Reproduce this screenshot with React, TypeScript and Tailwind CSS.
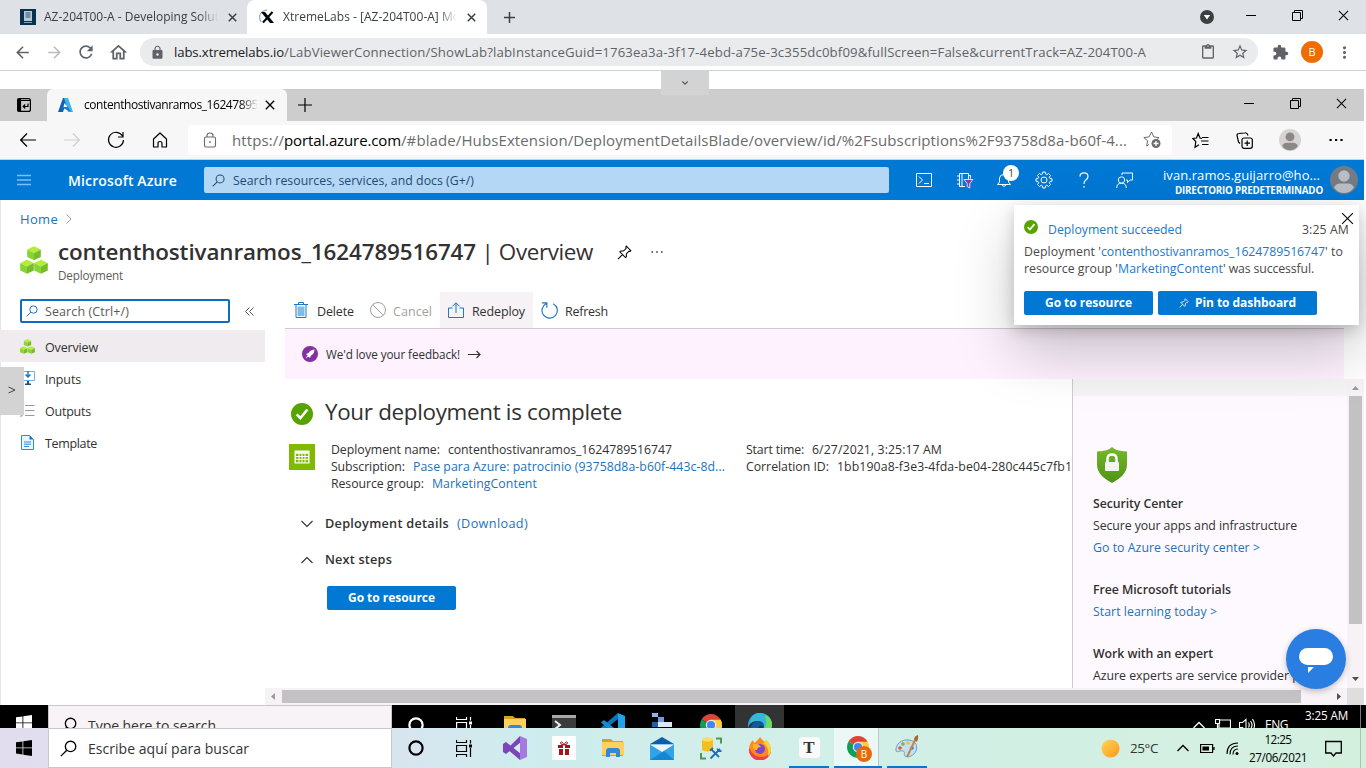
import { useLayoutEffect, useRef, useState } from "react";
import type { ReactNode } from "react";
import { MdArrowBack, MdArrowForward, MdRefresh, MdOutlineHome, MdLock, MdStarBorder, MdExtension, MdMoreVert, MdContentPaste } from "react-icons/md";

/* Single-line text set to a fixed advance width by even tracking. */
function T({ w, className = "", children }: { w: number; className?: string; children: string }) {
  const ref = useRef<HTMLSpanElement>(null);
  const [ls, setLs] = useState(0);
  useLayoutEffect(() => {
    const el = ref.current;
    if (!el) return;
    const natural = el.getBoundingClientRect().width;
    setLs((w - natural) / children.length);
  }, [w, children]);
  return (
    <span ref={ref} className={`inline-block shrink-0 whitespace-pre ${className}`} style={{ letterSpacing: `${ls}px` }}>
      {children}
    </span>
  );
}

function Slot({ className, children }: { className: string; children: ReactNode }) {
  return <div className={`flex shrink-0 items-center justify-center ${className}`}>{children}</div>;
}

function I({ s = 16, sw = 1, vb = 16, className = "", children }: { s?: number; sw?: number; vb?: number; className?: string; children: ReactNode }) {
  return (
    <svg width={s} height={s} viewBox={`0 0 ${vb} ${vb}`} fill="none" stroke="currentColor" strokeWidth={sw} className={`shrink-0 ${className}`}>
      {children}
    </svg>
  );
}

const Cross = ({ s = 12, sw = 1.1 }: { s?: number; sw?: number }) => (
  <I s={s} vb={12} sw={sw}><path d="M1 1l10 10M11 1L1 11" /></I>
);
const Plus = ({ s, sw }: { s: number; sw: number }) => <I s={s} vb={14} sw={sw}><path d="M7 0v14M0 7h14" /></I>;
const Minimize = () => <I s={10} vb={10}><path d="M0 5.5h10" /></I>;
const Restore = () => <I s={11} vb={11}><path d="M.5 2.5h8v8h-8zM2.5 2.5v-2h8v8h-2" /></I>;
const Magnifier = ({ s = 14, className = "" }: { s?: number; className?: string }) => (
  <I s={s} vb={14} sw={1.1} className={className}><circle cx="8.7" cy="5.3" r="4.3" /><path d="M5.6 8.4L.7 13.3" /></I>
);
const Cubes = ({ s }: { s: number }) => (
  <svg width={s} height={s} viewBox="0 0 28 28" className="shrink-0">
    {[[14, .2], [7, 13.700], [21, 13.700]].map(([x, y]) => (
      <g key={`${x}-${y}`} transform={`translate(${x} ${y})`}>
        <path d="M0 0l6.800 3.300L0 6.800-6.800 3.300z" fill="#b4ec36" />
        <path d="M-6.800 3.300L0 6.800V14l-6.800-3.200z" fill="#86d633" />
        <path d="M6.800 3.300L0 6.800V14l6.800-3.200z" fill="#76bc2d" />
      </g>
    ))}
  </svg>
);
const Pin = ({ s, sw = 1 }: { s: number; sw?: number }) => (
  <I s={s} vb={16} sw={sw}><path d="M10 1.2l4.800 4.800-1 .9-.9-.3-3 3 .2 2.800-1 1L3 7.300l1-1 2.800.2 3-3-.4-1.300zM5.800 10.200L1 15" /></I>
);
const Check = ({ s }: { s: number }) => (
  <svg width={s} height={s} viewBox="0 0 22 22" className="shrink-0">
    <circle cx="11" cy="11" r="11" fill="#57a300" />
    <path d="M5.700 11.300l3.700 3.800 7-8.600" fill="none" stroke="#fff" strokeWidth="2.600" />
  </svg>
);
const Chev = ({ d, s = 12, sw = 1.100 }: { d: "up" | "down" | "right"; s?: number; sw?: number }) => (
  <I s={s} vb={12} sw={sw}><path d={d === "up" ? "M.5 9L6 3.500 11.500 9" : d === "down" ? "M.5 3L6 8.500 11.500 3" : "M3 .5L8.500 6 3 11.500"} /></I>
);
const Person = ({ s, bg, fg }: { s: number; bg: string; fg: string }) => (
  <svg width={s} height={s} viewBox="0 0 28 28" className="shrink-0">
    <circle cx="14" cy="14" r="14" fill={bg} />
    <circle cx="14" cy="10" r="5.700" fill={fg} />
    <path d="M4 21.500q2-4 6-4h8q4 0 6 4-4 5.500-10 5.500T4 21.500z" fill={fg} />
  </svg>
);
const WinLogo = () => (
  <svg width="16" height="16" viewBox="0 0 16 16" fill="currentColor"><path d="M0 2.300l6.500-.9v6.100H0zM7.300 1.300L16 0v7.500H7.300zM0 8.300h6.500v6.200L0 13.600zM7.300 8.300H16V16l-8.700-1.300z" /></svg>
);
const TaskView = () => (
  <I s={17} vb={17} sw={1.200}><path d="M.5 0v2.500h10V0M.5 17v-2.500h10V17M.6 5.500h9.900v6H.6zM14.500 0v3.500M14.500 8v9" /><rect x="13" y="4.500" width="3" height="3" fill="currentColor" stroke="none" /></I>
);
const Folder = () => (
  <svg width="22" height="20" viewBox="0 0 22 20">
    <path d="M0 1h9l2 2H21v15H0z" fill="#d9a11c" /><path d="M0 4h22v13H0z" fill="#ffd15c" />
    <path d="M4 19v-6q0-3 3-3h8q3 0 3 3v6h-4v-4H8v4z" fill="#2f8bd8" />
  </svg>
);
const Chrome = () => (
  <svg width="22" height="22" viewBox="0 0 22 22">
    <path d="M11 11L1.500 5.500A11 11 0 0 1 20.500 5.500z" fill="#db4437" />
    <path d="M11 11L20.500 5.500A11 11 0 0 1 11 22z" fill="#ffcd40" />
    <path d="M11 11v11A11 11 0 0 1 1.500 5.500z" fill="#0f9d58" />
    <path d="M11 5.800h9.600A11 11 0 0 1 11 22l4.600-8.300z" fill="#ffcd40" />
    <circle cx="11" cy="11" r="5.200" fill="#f1f1f1" /><circle cx="11" cy="11" r="4.100" fill="#4285f4" />
  </svg>
);
const Cortana = () => <I s={16} sw={2.200}><circle cx="8" cy="8" r="6.600" /></I>;

function ChromeBrowser() {
  return (
    <>
      <div className="flex h-[34px] bg-[#dee1e6] text-[#3c4043]">
        <div className="flex w-[247px] items-center pl-5 text-[12px]">
          <svg width="16" height="16" viewBox="0 0 16 16"><path d="M0 0h16v16H0z" fill="#06344f" /><path d="M4 2h8v10H4z" fill="#b8cbd5" /><path d="M5.500 4h5M5.500 6h5M5.500 8h5" stroke="#31566b" /><path d="M4 13.500h8" stroke="#8aa5b3" /></svg>
          <div className="ml-2 w-[176px] overflow-hidden [mask-image:linear-gradient(to_right,black_88%,transparent_99%)]"><T w={175}>AZ-204T00-A - Developing Solut</T></div>
          <Slot className="w-[24px]"><Cross s={9} sw={2} /></Slot>
        </div>
        <div className="flex w-[240px] items-center rounded-t-lg bg-white pl-3 text-[12px]">
          <svg width="16" height="16" viewBox="0 0 16 16"><path d="M2 13C-1 7 1 2 8 1" fill="none" stroke="#6f8fc4" /><path d="M2 3h4l9 11h-4z" fill="#050505" /><path d="M13.500 3L4 13.500" stroke="#050505" strokeWidth="2" /></svg>
          <div className="ml-2 w-[176px] overflow-hidden [mask-image:linear-gradient(to_right,black_88%,transparent_99%)]"><T w={177}>XtremeLabs - [AZ-204T00-A] Mo</T></div>
          <Slot className="w-[24px]"><Cross s={9} sw={2} /></Slot>
        </div>
        <Slot className="w-11"><Plus s={11} sw={1.900} /></Slot>
        <div className="ml-auto flex pb-1 text-black">
          <Slot className="w-[42px] pt-1"><svg width="14" height="14" viewBox="0 0 14 14"><circle cx="7" cy="7" r="7" fill="#3c4043" /><path d="M3.800 5h6.400L7 9.500z" fill="#fff" /></svg></Slot>
          <Slot className="w-[46px]"><Minimize /></Slot>
          <Slot className="w-[46px]"><Restore /></Slot>
          <Slot className="w-[46px]"><Cross s={11} /></Slot>
        </div>
      </div>
      <div className="flex h-[37px] items-center border-b border-[#cfd1d4] bg-white pl-1.5 text-[#5f6368]">
        <Slot className="w-8"><MdArrowBack size={19} /></Slot>
        <Slot className="w-8 text-[#babcbe]"><MdArrowForward size={19} /></Slot>
        <Slot className="w-8"><MdRefresh size={20} /></Slot>
        <Slot className="w-8"><MdOutlineHome size={21} /></Slot>
        <div className="ml-1.5 flex h-7 w-[1118px] shrink-0 items-center rounded-full bg-[#eaebed] pl-2.5 pr-0.5">
          <MdLock size={15} />
          <div className="ml-[9px] flex pt-px text-[13.200px]">
            <T w={110} className="text-[#202124]">labs.xtremelabs.io</T>
            <T w={862}>/LabViewerConnection/ShowLab?labInstanceGuid=1763ea3a-3f17-4ebd-a75e-3c355dc0bf09&amp;fullScreen=False&amp;currentTrack=AZ-204T00-A</T>
          </div>
          <Slot className="ml-auto w-8"><MdContentPaste size={16} /></Slot>
          <Slot className="w-8"><MdStarBorder size={18} /></Slot>
        </div>
        <Slot className="ml-1.5 w-8"><MdExtension size={17} /></Slot>
        <Slot className="w-8"><span className="flex h-[22px] w-[22px] items-center justify-center rounded-full bg-[#ee6c00] text-[11px] text-white">B</span></Slot>
        <Slot className="w-8"><MdMoreVert size={19} /></Slot>
      </div>
    </>
  );
}

function EdgeBrowser() {
  return (
    <>
      <div className="mr-0.5 flex h-8 bg-[#cdcdcd] text-black">
        <Slot className="w-[47px]"><I s={14} vb={14} sw={1.200}><rect x=".6" y=".6" width="12.800" height="12.800" rx="2" /><path d="M1 1h2.500v12H1zM1 2.500h12" fill="currentColor" /><path d="M11 5.500v3H6.500M8.200 6.500l-2 2 2 2" /></I></Slot>
        <div className="flex w-[240px] items-center rounded-t-md bg-[#f7f7f7] pl-[11px] text-[12px]">
          <svg width="16" height="14" viewBox="0 0 16 14"><path d="M5 0h5L5 14H0z" fill="#1260ae" /><path d="M6 0h4l5 14h-5z" fill="#3ab4ec" /><path d="M3 9h7l3 5z" fill="#1d7bd0" /><path d="M6.500 5l-1 4H9z" fill="#f7f7f7" /></svg>
          <div className="ml-2.5 w-[174px] overflow-hidden [mask-image:linear-gradient(to_right,black_90%,transparent)]"><T w={174}>contenthostivanramos_16247895</T></div>
          <Slot className="ml-0.5 w-5"><Cross s={10} sw={1.600} /></Slot>
        </div>
        <Slot className="w-[35px]"><Plus s={14} sw={1.200} /></Slot>
        <div className="ml-auto flex pb-1">
          <Slot className="w-[46px]"><Minimize /></Slot>
          <Slot className="w-[46px]"><Restore /></Slot>
          <Slot className="w-[46px]"><Cross s={11} /></Slot>
        </div>
      </div>
      <div className="mr-0.5 flex h-[39px] items-center border-b border-[#bcd3ea] bg-[#f7f7f7] pl-1.5 text-black">
        <Slot className="w-11"><I s={16} sw={1.200}><path d="M0 8h16M7 1.500L.7 8 7 14.500" /></I></Slot>
        <Slot className="w-11 text-[#cfcfcf]"><I s={16} sw={1.200}><path d="M0 8h16M9 1.500L15.300 8 9 14.500" /></I></Slot>
        <Slot className="w-11"><I s={18} vb={18} sw={1.200}><path d="M15.500 5A7.500 7.500 0 1 0 16.500 9M16 1v5h-5" /></I></Slot>
        <Slot className="w-11"><I s={16} sw={1.200}><path d="M1.500 7L8 1l6.500 6v8H10v-3.500q0-2-2-2t-2 2V15H1.500z" strokeLinejoin="round" /></I></Slot>
        <div className="ml-1.5 flex h-[30px] w-[984px] items-center rounded bg-white text-[#6b6b6b]">
          <Slot className="w-11"><I s={16} sw={1.100}><rect x="2.500" y="5" width="11" height="10" rx="1.500" /><path d="M5 5V3.500q0-2.500 3-2.500t3 2.500V5" /><rect x="7.200" y="9.200" width="1.600" height="1.600" fill="currentColor" stroke="none" /></I></Slot>
          <div className="flex text-[15px]">
            <T w={52}>https://</T><T w={117} className="text-black">portal.azure.com</T>
            <T w={726}>/#blade/HubsExtension/DeploymentDetailsBlade/overview/id/%2Fsubscriptions%2F93758d8a-b60f-4...</T>
          </div>
          <Slot className="ml-auto w-10"><I s={18} vb={18}><path d="M8.500 1l2.300 4.900 5.200.7-3.800 3.600M6 13.500L3.700 15l.9-5.300L.8 6.600l5.300-.7L8.500 1" /><circle cx="13" cy="12.500" r="4.500" fill="currentColor" stroke="none" /><path d="M13 10v5M10.500 12.500h5" stroke="#fff" strokeWidth="1.300" /></I></Slot>
        </div>
        <Slot className="ml-1.5 w-11"><I s={17} vb={17} sw={1.200}><path d="M10 6.500L8 6 6.200 1.500 4.500 6 .8 6.500 3.800 9.500l-.8 5.700 4-2.500M10 5.500h6.500M9 9h7.500M10 12.500h6.500" /></I></Slot>
        <Slot className="w-11"><I s={17} vb={17} sw={1.200}><rect x="6" y="6" width="10.300" height="10.300" rx="2" /><path d="M11.200 8.500v5.500M8.500 11.200H14M4 11.500L2.500 10 1 3.500q0-2 2-2L9 .8q1.500-.3 2.300 1.200l.7 1.500" /></I></Slot>
        <Slot className="w-12"><Person s={22} bg="#d6d3d1" fg="#8a8785" /></Slot>
        <Slot className="w-11"><I s={14} vb={14}><path d="M.5 7h2.200M6 7h2.200M11.400 7h2.200" strokeWidth="2" /></I></Slot>
      </div>
    </>
  );
}

function AzureBar() {
  return (
    <div className="mr-0.5 flex h-10 items-center bg-[#0078d4] text-white">
      <Slot className="w-[48px] text-[#7fbfee]"><I s={14} vb={14}><path d="M0 2.500h14M0 7h14M0 11.500h14" strokeWidth="1.500" /></I></Slot>
      <div className="ml-5 w-[136px] shrink-0 pt-px text-[14px] font-semibold"><T w={109}>Microsoft Azure</T></div>
      <div className="flex h-[26px] w-[685px] shrink-0 items-center rounded-xs bg-[#b3d7f5] pl-2 text-[12.300px] text-[#1f4b73]">
        <Magnifier s={13} /><T w={241} className="ml-2 pt-0.5">Search resources, services, and docs (G+/)</T>
      </div>
      <Slot className="ml-[15px] w-10"><I s={16}><path d="M.5 1.500h15v13H.5zM3 4.500l3.500 3.500L3 11.500M8 11.500h5" /></I></Slot>
      <Slot className="w-10"><I s={17} vb={17}><path d="M12.500 7V1.500h-9v13H9M6 1.500v13M1 4h2.500M1 8h2.500M1 12h2.500M12.500 3.500h2v3" /><path d="M8 7.500h9l-3.200 4V16l-2.600-1.500v-3z" fill="#7a3eb1" stroke="#fff" strokeWidth=".8" /></I></Slot>
      <Slot className="relative w-10"><I s={16}><path d="M1.500 12.500h13l-2-2.500V6Q12 2.500 8 2.500T3.500 6v4zM6 13q2 3 4 0" /></I><span className="absolute left-[19px] top-[-7px] flex h-4 w-4 items-center justify-center rounded-full bg-white text-[10px] leading-none text-[#333]">1</span></Slot>
      <Slot className="w-10"><I s={18} vb={18}><circle cx="9" cy="9" r="3" /><path d="M7.800 1h2.400l.4 2 1.200.6L13.600 2.500l1.900 1.900-1.200 1.800.6 1.300 2.100.3v2.400l-2.100.4-.6 1.200 1.200 1.800-1.900 1.900-1.800-1.200-1.200.6-.4 2.100H7.800l-.4-2.100-1.200-.6-1.800 1.200-1.900-1.900 1.200-1.800-.6-1.200L1 10.200V7.800l2.100-.3.600-1.300-1.200-1.800 1.900-1.900 1.800 1.100L7.400 3z" /></I></Slot>
      <Slot className="w-10"><I s={16} sw={1.200}><path d="M4 4.500Q4 .8 8 .8t4 3.700Q12 6.500 9.800 8 8 9.300 8 12M8 14v1.700" /></I></Slot>
      <Slot className="w-10"><I s={17} vb={17}><circle cx="5.500" cy="8" r="3.200" /><path d="M.7 16q0-4.800 4.800-4.800t4.800 4.800M6 3V1h10.500v7H14l-2.500 2.500V8h-1.500" /></I></Slot>
      <div className="ml-auto flex flex-col items-end pt-1.5">
        <T w={157} className="mr-[3px] text-[13px] leading-[16px]">ivan.ramos.guijarro@ho...</T>
        <T w={148} className="text-[9.800px] font-bold leading-[16px]">DIRECTORIO PREDETERMINADO</T>
      </div>
      <div className="ml-[7px] mr-[6px] shrink-0"><Person s={28} bg="#747b82" fg="#b9bec4" /></div>
    </div>
  );
}

function NavItem({ icon, label, w, active = false }: { icon: ReactNode; label: string; w: number; active?: boolean }) {
  return (
    <div className={`flex h-8 items-center pl-5 ${active ? "bg-[#efebef]" : ""}`}>
      <Slot className="mr-[10px] w-[15px]">{icon}</Slot><T w={w} className="pt-[5px]">{label}</T>
    </div>
  );
}

function Sidebar() {
  return (
    <div className="w-[265px] shrink-0 text-[12.500px] text-[#323130]">
      <div className="flex h-[38px] items-center pl-5">
        <div className="flex h-6 w-[210px] items-center rounded-xs border-2 border-[#0f6cbd] bg-white pl-1"><Magnifier s={12} className="text-[#0f6cbd]" /><T w={84} className="ml-[7px] pt-0.5 text-[#5c5a58]">Search (Ctrl+/)</T></div>
        <Slot className="ml-[11px] w-4 text-[#555]"><I s={9} vb={9}><path d="M4.500.5l-4 4 4 4M8.500.5l-4 4 4 4" /></I></Slot>
      </div>
      <NavItem active label="Overview" w={53} icon={<Cubes s={15} />} />
      <NavItem label="Inputs" w={36} icon={<svg width="14" height="14" viewBox="0 0 14 14"><path d="M.5.500h13v9H.5z" fill="#fff" stroke="#6aaee6" /><path d="M7 0v6M4.500 3.500L7 6l2.500-2.500" fill="none" stroke="#0f78c8" strokeWidth="1.400" /><path d="M6 10h2v3H6zM4 12.500h6V14H4z" fill="#234d80" /></svg>} />
      <NavItem label="Outputs" w={46} icon={<svg width="15" height="13" viewBox="0 0 15 13" fill="none"><path d="M5 1.500h9.500M5 6.500h9.500M5 11.500h9.500" stroke="#9b9b9b" strokeWidth="1.200" /><path d="M0 1.500l1 1 2-2M0 6.500l1 1 2-2M0 11.500l1 1 2-2" stroke="#2f82cf" /></svg>} />
      <NavItem label="Template" w={52} icon={<svg width="13" height="15" viewBox="0 0 13 15"><path d="M.5.500h8l4 4v10H.5z" fill="#eaf5fd" stroke="#2f8bd8" /><path d="M8.500.500l4 4h-4z" fill="#1673c4" /><path d="M3 7h7M3 9.200h7M3 11.500h5" stroke="#2f8bd8" /></svg>} />
    </div>
  );
}

function Commands() {
  return (
    <div className="flex h-[37px] border-b border-[#cfccce] text-[12.500px] text-[#323130]">
      <div className="flex items-center pl-2"><Slot className="w-4"><svg width="14" height="16" viewBox="0 0 14 16"><path d="M2 3v12.500h10V3M0 2.500h14M4.500 2V.5h5V2" fill="none" stroke="#1b79c9" /><path d="M3.500 4.500h7V14h-7z" fill="#7dbdea" /></svg></Slot><T w={37} className="ml-2 pt-[5px]">Delete</T></div>
      <div className="flex items-center pl-4 text-[#a19f9d]"><I s={16}><circle cx="8" cy="8" r="7.500" /><path d="M2.800 2.800l10.400 10.400" /></I><T w={39} className="ml-[7px] pt-[5px]">Cancel</T></div>
      <div className="ml-2 flex w-[93px] items-center bg-[#f6f2f6] pl-2"><I s={16} className="text-[#1b79c9]"><path d="M4.500 6h-4v9.500h15V6h-4M8 11V.8M4.500 4.300L8 .8l3.500 3.500" /></I><T w={53} className="ml-2 pt-[5px]">Redeploy</T></div>
      <div className="flex items-center pl-2"><I s={17} sw={1.100} className="text-[#1b79c9]"><path d="M5 1.500A7.200 7.200 0 1 0 11.500 1.600M1 .8h4.500v4.500" /></I><T w={43} className="ml-[7px] pt-[5px]">Refresh</T></div>
    </div>
  );
}

function Details() {
  return (
    <div className="w-[787px] shrink-0 overflow-hidden pt-[18px] text-[12.300px] text-[#323130]">
      <div className="flex h-[30px] items-center pl-1.5"><div className="pt-1"><Check s={22} /></div><T w={297} className="ml-3 text-[22.400px]">Your deployment is complete</T></div>
      <div className="flex pl-1 pt-[14px] leading-[17px]">
        <div className="mt-[3px] flex h-[26px] w-[26px] items-center justify-center bg-[#7fba00]"><svg width="16" height="14" viewBox="0 0 16 14"><path d="M.5.500h15v13H.5z" fill="#fff" /><path d="M2 3.800h12v8.500H2z" fill="#7fba00" /><path d="M2 6.500h12M2 9.300h12M5 3.800v8.500M8 3.800v8.500M11 3.800v8.500" stroke="#fff" /></svg></div>
        <div className="ml-4 w-[416px]">
          <div className="flex"><T w={109}>Deployment name:</T><T w={224} className="ml-2">contenthostivanramos_1624789516747</T></div>
          <div className="flex"><T w={74}>Subscription:</T><T w={312} className="ml-2 text-[#1a73bd]">Pase para Azure: patrocinio (93758d8a-b60f-443c-8d...</T></div>
          <div className="flex"><T w={93}>Resource group:</T><T w={105} className="ml-2 text-[#1a73bd]">MarketingContent</T></div>
        </div>
        <div>
          <div className="flex"><T w={58}>Start time:</T><T w={130} className="ml-2">6/27/2021, 3:25:17 AM</T></div>
          <div className="flex"><T w={83}>Correlation ID:</T><T w={235} className="ml-2">1bb190a8-f3e3-4fda-be04-280c445c7fb1</T></div>
        </div>
      </div>
      <div className="mt-[23px] flex h-[18px] items-center pl-4"><Chev d="down" s={12} /><T w={124} className="ml-3 text-[12.700px] font-semibold">Deployment details</T><T w={71} className="ml-2 text-[12.700px] text-[#1a73bd]">(Download)</T></div>
      <div className="mt-[18px] flex h-[18px] items-center pl-4"><Chev d="up" s={12} /><T w={67} className="ml-3 text-[12.700px] font-semibold">Next steps</T></div>
      <div className="ml-[42px] mt-[17px] flex h-6 w-[129px] items-center justify-center rounded-xs bg-[#0078d4] font-bold text-white"><T w={87} className="text-[12px]">Go to resource</T></div>
    </div>
  );
}

function Help() {
  return (
    <div className="h-[309px] w-[275px] shrink-0 overflow-hidden border-l border-[#cfcccf] bg-[#fdf9fe] text-[12.300px] leading-[22px] text-[#323130]">
      <div className="h-[17px] bg-[#f6f5f6]" />
      <div className="pl-5 pt-[50px]">
        <svg width="38" height="38" viewBox="0 0 38 38"><defs><linearGradient id="sh" x1="0" y1="0" x2="0" y2="1"><stop stopColor="#76b82a" /><stop offset="1" stopColor="#4e9414" /></linearGradient></defs><path d="M19 1c4 3.500 9 4.200 15 4.500v13c0 9-7 14-15 18.500C11 32.500 4 27.500 4 18.500v-13C10 5.200 15 4.500 19 1z" fill="url(#sh)" /><path d="M14.500 17v-4q0-4.500 4.500-4.500t4.500 4.500v4" fill="none" stroke="#fff" strokeWidth="2.500" /><rect x="12" y="16" width="14" height="9" rx=".8" fill="#f3f3f3" /></svg>
        <div className="mt-[9px] flex flex-col items-start">
          <T w={90} className="font-semibold">Security Center</T><T w={204}>Secure your apps and infrastructure</T><T w={167} className="text-[#1a73bd]">{"Go to Azure security center >"}</T>
          <T w={138} className="mt-5 font-semibold">Free Microsoft tutorials</T><T w={124} className="text-[#1a73bd]">{"Start learning today >"}</T>
          <T w={120} className="mt-5 font-semibold">Work with an expert</T><T w={223}>Azure experts are service provider part</T>
        </div>
      </div>
    </div>
  );
}

function Toast() {
  return (
    <div className="absolute left-[1014px] top-[205px] h-[120px] w-[345px] bg-white text-[12.300px] text-[#4a4847] shadow-[0_26px_58px_rgba(0,0,0,.22),0_5px_14px_rgba(0,0,0,.18)]">
      <div className="flex pl-2.5 pt-[15px] leading-[18px]"><Check s={14} /><T w={134} className="ml-2.5 pt-px text-[#1a78cf]">Deployment succeeded</T><T w={47} className="ml-auto mr-2.5 pt-px">3:25 AM</T></div>
      <div className="pl-2.5 pt-1 leading-[17px]">
        <div className="flex"><T w={77}>{"Deployment '"}</T><T w={224} className="text-[#1a78cf]">contenthostivanramos_1624789516747</T><T w={18}>{"' to"}</T></div>
        <div className="flex"><T w={94}>{"resource group '"}</T><T w={105} className="text-[#1a78cf]">MarketingContent</T><T w={91}>{"' was successful."}</T></div>
      </div>
      <div className="mt-[14px] flex gap-[5px] pl-2.5 text-[12px] font-bold text-white">
        <div className="flex h-6 w-[129px] items-center justify-center rounded-xs bg-[#0078d4]"><T w={87}>Go to resource</T></div>
        <div className="flex h-6 w-[159px] items-center justify-center gap-1.5 rounded-xs bg-[#0078d4]"><Pin s={10} sw={1.300} /><T w={101}>Pin to dashboard</T></div>
      </div>
      <div className="absolute right-[5px] top-[7px] text-black"><Cross s={13} sw={1} /></div>
    </div>
  );
}

function Portal() {
  return (
    <div className="h-[505px] border-l border-[#e6e6e6] bg-white">
      <div className="flex h-[38px] items-center pl-[19px] text-[13px]"><T w={38} className="pt-0.5 text-[#1a73bd]">Home</T><span className="ml-1.5 text-[#888]"><Chev d="right" s={10} sw={1} /></span></div>
      <div className="flex h-[54px] pl-[19px] text-[#323130]">
        <div className="pt-2"><Cubes s={28} /></div>
        <div className="ml-2.5">
          <div className="flex h-[28px] items-center text-[22.400px]"><T w={418} className="font-semibold">contenthostivanramos_1624789516747</T><T w={117}> | Overview</T>
            <span className="ml-6 text-black"><Pin s={15} sw={1.100} /></span><span className="ml-[19px]"><I s={12} vb={12}><path d="M.5 6h1.500M5.200 6h1.500M10 6h1.500" strokeWidth="1.500" /></I></span></div>
          <div className="flex"><T w={65} className="text-[11.700px] leading-[19px] text-[#605e5c]">Deployment</T></div>
        </div>
      </div>
      <div className="flex h-[413px]">
        <div className="-ml-px flex"><Sidebar /></div>
        <div className="w-[1099px]">
          <div className="w-[1079px] pl-5"><Commands /><div className="flex h-[50px] items-center bg-[#fdf2fe] pl-[17px] text-[11.700px] text-[#323130]">
            <svg width="16" height="16" viewBox="0 0 16 16"><circle cx="8" cy="8" r="8" fill="#8430a0" /><path d="M12.500 3.500q-4 0-6 3.500L4 8l4 4 1-2.500q3.500-2 3.500-6zM5.500 9.500l-2 3 3-2z" fill="#fff" /></svg>
            <T w={134} className="ml-2 pt-px">We'd love your feedback!</T><I s={13} vb={13} sw={1.200} className="ml-2"><path d="M0 6.500h12M8.500 3l3.500 3.500L8.500 10" /></I></div></div>
          <div className="flex h-[309px]">
            <div className="w-5 shrink-0" /><Details /><Help />
            <div className="flex w-[17px] shrink-0 flex-col items-center bg-[#f6f2f6]">
              <svg width="7" height="4" viewBox="0 0 7 4" className="mt-[7px]"><path d="M3.500 0L7 4H0z" fill="#9b9b9b" /></svg>
              <div className="mt-[6px] h-[228px] w-[13px] bg-[#c4c1c4]" />
              <svg width="7" height="4" viewBox="0 0 7 4" className="mb-[7px] mt-auto"><path d="M3.500 4L7 0H0z" fill="#505050" /></svg>
            </div>
          </div>
          <div className="flex h-[17px] items-center bg-[#f6f2f6]">
            <svg width="4" height="7" viewBox="0 0 4 7" className="ml-1.5"><path d="M0 3.500L4 0v7z" fill="#9b9b9b" /></svg>
            <div className="ml-[7px] h-[13px] w-[1019px] bg-[#c4c1c4]" />
            <svg width="4" height="7" viewBox="0 0 4 7" className="ml-auto mr-1.5"><path d="M4 3.500L0 0v7z" fill="#505050" /></svg>
            <div className="h-full w-[17px] bg-[#dedede]" />
          </div>
        </div>
      </div>
    </div>
  );
}

const Clip = ({ children }: { children: ReactNode }) => <Slot className="w-[49px]">{children}</Slot>;

function RemoteTaskbar() {
  return (
    <div className="h-[23px] overflow-hidden bg-black text-white">
      <div className="flex h-10">
        <Slot className="w-[48px] pb-1"><WinLogo /></Slot>
        <div className="flex h-10 w-[344px] items-center border border-[#c8c6c8] bg-[#f7f3f7] pl-[11px] text-[#333]"><Magnifier s={17} className="text-black" /><T w={128} className="ml-[11px] text-[14px]">Type here to search</T></div>
        <Slot className="w-12"><Cortana /></Slot><Slot className="mr-0.5 w-12"><TaskView /></Slot>
        <Clip><Folder /></Clip>
        <Clip><svg width="24" height="20" viewBox="0 0 24 20"><path d="M0 0h24v20H0z" fill="#3c3c3c" /><path d="M0 0h24v3H0z" fill="#a8a8a8" /><path d="M3 6l5 4-5 4" fill="none" stroke="#eee" strokeWidth="2" /></svg></Clip>
        <Clip><svg width="24" height="24" viewBox="0 0 24 24"><path d="M17 0l7 3v18l-7 3z" fill="#23a0ea" /><path d="M17 0v6L3 17l-3-2.500z" fill="#0a76bf" /><path d="M17 24v-6L3 7 0 9.500z" fill="#1689d1" /></svg></Clip>
        <Clip><svg width="22" height="24" viewBox="0 0 22 24"><path d="M1 0h6v4H1z" fill="#8fb4e8" /><path d="M7 4h6v5H7z" fill="#6d9fe0" /><path d="M1 9h6v5H1z" fill="#1d5fb4" /><path d="M7 9h6v5H7zM13 9h8v5h-8z" fill="#dce6f5" /></svg></Clip>
        <Clip><Chrome /></Clip>
        <div className="bg-[#333]"><div className="flex h-10 w-[49px] items-center justify-center"><svg width="24" height="24" viewBox="0 0 24 24"><path d="M0 12a12 12 0 0 1 24 0c0 5-5 7-9 5 2-3 0-9-6-9S0 12 0 18z" fill="#1f9fdc" /><path d="M4 3a12 12 0 0 1 20 9c0 5-5 6-9 5 3-4-1-9-6-9-4 0-7 2-8 3z" fill="#35b8d8" /><path d="M17 2q7 3 7 10c0 5-5 6-9 5 5-5 3-10 2-15z" fill="#6fdc59" /><path d="M2 17Q4 8 11 8q5 0 5 6-2-2-4-1-4 2-1 8-7 0-9-4z" fill="#0c59a4" /></svg></div></div>
        <div className="ml-auto flex">
          <Slot className="w-6"><Chev d="up" s={12} sw={1.300} /></Slot>
          <Slot className="w-6"><I s={16} sw={1.200}><path d="M5 3h10.500v8H4V7M.5 2.500h4v4h-4zM2.500 6.500V13" /></I></Slot>
          <Slot className="w-6"><I s={16} sw={1.100}><path d="M.5 5.500h3L7 2.500v11l-3.500-3h-3zM9.500 5.500q1.500 2.500 0 5M11.500 4q3 4 0 8M13.500 2q4 6 0 12" /></I></Slot>
          <div className="flex w-[46px] items-center pl-1.5 text-[12px]"><T w={23}>ENG</T></div>
          <div className="h-[21px] w-[55px] text-[11.700px] leading-[21px]"><T w={43}>3:25 AM</T></div>
          <div className="mr-[5px] w-px bg-[#777]" />
        </div>
      </div>
    </div>
  );
}

function HostTaskbar() {
  return (
    <div className="flex h-10 bg-[linear-gradient(to_right,#e2ddee_0%,#d9e4ef_28%,#cfecee_38%,#d2efe8_60%,#d3f0df_100%)] text-black">
      <Slot className="w-[48px]"><WinLogo /></Slot>
      <div className="flex w-[344px] items-center border border-[#c8c8c8] bg-white pl-[11px] text-[#333]"><Magnifier s={17} className="text-black" /><T w={161} className="ml-[11px] text-[14px]">Escribe aquí para buscar</T></div>
      <Slot className="w-12"><Cortana /></Slot><Slot className="mr-0.5 w-12"><TaskView /></Slot>
      <Clip><svg width="24" height="24" viewBox="0 0 24 24"><path d="M17 0l7 3v18l-7 3z" fill="#a57ae0" /><path d="M17 0v7L3 18l-3-2V8l3-2 14 11v7L4 13z" fill="#7b46b8" /><path d="M17 7l-6 5 6 5z" fill="#d5eeee" /></svg></Clip>
      <Clip><span className="flex h-6 w-6 items-center justify-center bg-white"><svg width="12" height="14" viewBox="0 0 12 14" fill="#a31515"><path d="M0 4h5v3H0zM7 4h5v3H7zM1 8h4v6H1zM7 8h4v6H7z" /><path d="M6 4Q2 3.500 2.500 1.500 4-.5 6 4q2-4.500 3.500-2.500Q10 3.500 6 4z" fill="none" stroke="#a31515" /></svg></span></Clip>
      <Clip><Folder /></Clip>
      <Clip><svg width="24" height="23" viewBox="0 0 24 23"><path d="M12 0l12 7v4H0V7z" fill="#0f5fa8" /><path d="M0 7h24v16H0z" fill="#2fa4e8" /><path d="M0 23L14 14l10 9z" fill="#1585d4" /><path d="M0 7.500h24L12 15z" fill="#eef5fb" /></svg></Clip>
      <Clip><svg width="22" height="23" viewBox="0 0 22 23"><path d="M2 2q5-3 11 0v11q-5 3-11 0z" fill="#f3bf1b" /><ellipse cx="7.500" cy="2.500" rx="5.500" ry="2" fill="#fbdc6c" /><path d="M16 1.500h5v5M1 16v5.500h5" fill="none" stroke="#4c9b50" strokeWidth="2" /><path d="M11.500 12.500L19 20M20 12l-9.500 9.500" stroke="#1a6fb8" strokeWidth="1.800" /><path d="M10 13.500l3-2.500M17.500 11.500q0 3 4 2.500" fill="none" stroke="#1a6fb8" strokeWidth="1.800" /></svg></Clip>
      <Clip><svg width="24" height="24" viewBox="0 0 24 24"><path d="M12 1c2 2 2 3 5 5l1-2c3 3 5 6 5 10a11 10 0 0 1-22 0c0-4 1-7 4-10l1 3c2-1 4-3 6-6z" fill="#ff8a1c" /><path d="M1 12a11 11 0 0 0 22 3c-2 4-5 6-10 6S4 18 1 12z" fill="#f33b4c" /><path d="M18 4c3 3 5 6 5 10 0 2-1 5-3 6 1-7-1-10-5-13l2-1z" fill="#ffd43b" /><circle cx="12" cy="13" r="5" fill="#7c48c8" /><path d="M5 8q5-1 8 3-4 0-4 3-5 0-4-6z" fill="#ffb52b" /></svg></Clip>
      <div className="ml-[5px] flex w-10 flex-col items-center border-b-2 border-[#0078d4] pt-[9px]"><span className="flex h-[21px] w-[21px] items-center justify-center rounded bg-[#fafafa] font-['Liberation_Serif',serif] text-[17px] font-bold leading-none text-[#333]">T</span></div>
      <div className="ml-[5px] flex w-[48px] border-b-2 border-[#0078d4]"><div className="relative flex w-[45px] items-center justify-center border-r border-[#b8c8c4] bg-[#ecf8f5] pl-[3px]"><Chrome /><span className="absolute left-[22px] top-[18px] flex h-4 w-4 items-center justify-center rounded-full bg-[#e46a0c] text-[10px] leading-none text-white">B</span></div></div>
      <div className="ml-[5px] flex w-10 items-center justify-center border-b-2 border-[#0078d4]"><svg width="24" height="24" viewBox="0 0 24 24"><path d="M1 16C0 9 7 4 14 5s9 6 7 11-9 7-11 5 1-4-2-5-5 2-7 0z" fill="#c5e0f2" stroke="#6d9fc0" /><circle cx="5" cy="13" r="1.800" fill="#e2572b" /><circle cx="8" cy="9" r="1.800" fill="#77b843" /><circle cx="13" cy="8" r="1.800" fill="#f0c22b" /><circle cx="17" cy="13" r="1.800" fill="#3d83c9" /><path d="M21 3L12 22" stroke="#c08552" strokeWidth="2" /><path d="M19 5q0-4 4-5 1 3-1 7z" fill="#a86b35" /></svg></div>
      <div className="ml-auto flex items-center">
        <svg width="19" height="19" viewBox="0 0 20 20"><defs><linearGradient id="sun" x1="0" y1="0" x2="1" y2="1"><stop stopColor="#ffd65a" /><stop offset="1" stopColor="#ff9815" /></linearGradient></defs><circle cx="10" cy="10" r="9.500" fill="url(#sun)" /></svg>
        <T w={28} className="ml-[10px] mr-px text-[13.500px] text-[#333]">25°C</T>
        <Slot className="ml-3 w-6"><Chev d="up" s={12} sw={1.300} /></Slot>
        <Slot className="w-6"><I s={15} vb={15} sw={1.200}><path d="M.6 3.500h12v8H.6zM14 6v3" /><path d="M2.500 5.500H9v4H2.500z" fill="currentColor" stroke="none" /></I></Slot>
        <Slot className="w-[26px]"><I s={13} vb={13} sw={1.100}><path d="M1 12Q1 1 12 1M4 12.500Q4 4 12 4M7 12.500Q7 7 12 7" /><circle cx="11" cy="11.500" r="1.500" fill="currentColor" stroke="none" /></I></Slot>
        <div className="flex w-[66px] flex-col items-center text-[11.700px] leading-[18px]"><T w={27}>12:25</T><T w={58}>27/06/2021</T></div>
        <Slot className="ml-0.5 w-[40px]"><I s={17} vb={17} sw={1.300}><path d="M.7 1.500h15.600v11.500H11l-2.500 3-2.500-3H.7z" /></I></Slot>
        <div className="ml-[7px] mr-[5px] h-10 w-px bg-[#abc2b6]" />
      </div>
    </div>
  );
}

export default function App() {
  return (
    <div className="relative h-[768px] w-[1366px] overflow-hidden bg-white font-['Open_Sans',sans-serif]">
      <ChromeBrowser />
      <div className="h-[18px] bg-white" />
      <EdgeBrowser />
      <AzureBar />
      <Portal />
      <RemoteTaskbar />
      <HostTaskbar />
      <div className="absolute left-[661px] top-[71px] flex h-6 w-12 items-center justify-center bg-[#d3d3d3] text-[#555]"><Chev d="down" s={6} sw={2.200} /></div>
      <div className="absolute left-0 top-[367px] flex h-12 w-6 items-center justify-center bg-[#d3d3d3] pb-0.5 text-[#444]"><I s={8} vb={8}><path d="M.5 1L7 4 .5 7" /></I></div>
      <Toast />
      <div className="absolute left-[1286px] top-[629px] flex h-[60px] w-[60px] items-center justify-center rounded-full bg-[#2a7de1] shadow-[0_2px_6px_rgba(0,0,0,.25)]">
        <svg width="34" height="26" viewBox="0 0 34 26" fill="#fff" className="mt-1"><rect width="34" height="17" rx="8.500" /><path d="M9 19h6l-6 6z" /></svg>
      </div>
    </div>
  );
}
